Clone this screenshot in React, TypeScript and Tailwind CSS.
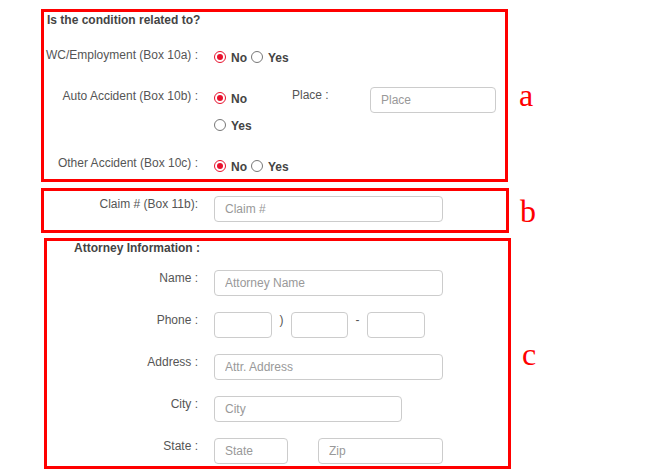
import React from "react";

const Radio = ({ checked }: { checked?: boolean }) =>
  checked ? (
    <span className="w-[12px] h-[12px] rounded-full border-[1.5px] border-[#e8112d] bg-white flex items-center justify-center shrink-0">
      <span className="w-[6px] h-[6px] rounded-full bg-[#e8112d]" />
    </span>
  ) : (
    <span className="w-[12px] h-[12px] rounded-full border border-[#777] bg-white shrink-0" />
  );

const Opt = ({ label, checked }: { label: string; checked?: boolean }) => (
  <span className="flex items-center">
    <Radio checked={checked} />
    <span className="ml-[5px] pt-[2px] font-bold text-[#444] leading-[16px]">{label}</span>
  </span>
);

const Input = ({ w, ph }: { w: string; ph?: string }) => (
  <input
    placeholder={ph}
    className={`${w} h-[26px] border border-[#ccc] rounded-[4px] pl-[10px] text-[12px] text-[#555] placeholder:text-[#999] bg-white outline-none shrink-0`}
  />
);

const Letter = ({ ch, mt }: { ch: string; mt: string }) => (
  <div
    className={`${mt} ml-[11px] text-[32px] leading-[32px] text-[#ff0000] font-['Liberation_Serif','Times_New_Roman',serif]`}
  >
    {ch}
  </div>
);

export default function App() {
  return (
    <div className="w-[669px] h-[473px] overflow-hidden bg-white text-[12px] leading-[16px] text-[#555] font-['Liberation_Sans',Arial,sans-serif]">
      <div className="flex flex-col pl-[41px] pt-[9px]">
        {/* Box a */}
        <div className="flex items-start">
          <div className="w-[467px] h-[173px] border-[3px] border-[#ff0000] flex flex-col">
            <div className="ml-[3px] mt-[1px] h-[14px] leading-[14px] font-bold text-[#444]">
              Is the condition related to?
            </div>
            <div className="mt-[20px] h-[20px] flex items-center">
              <div className="w-[154px] text-right pb-[4px]">WC/Employment (Box 10a) :</div>
              <div className="ml-[16px] flex items-center gap-[4px]">
                <Opt label="No" checked />
                <Opt label="Yes" />
              </div>
            </div>
            <div className="mt-[20px] flex items-start">
              <div className="w-[154px] text-right pt-[1px]">Auto Accident (Box 10b) :</div>
              <div className="ml-[16px] w-[78px] flex flex-col">
                <div className="mt-[1px] h-[20px] flex items-center">
                  <Opt label="No" checked />
                </div>
                <div className="mt-[7px] h-[20px] flex items-center">
                  <Opt label="Yes" />
                </div>
              </div>
              <div className="w-[78px]">Place :</div>
              <Input w="w-[126px]" ph="Place" />
            </div>
            <div className="mt-[21px] h-[20px] flex items-center">
              <div className="w-[154px] text-right pb-[6px]">Other Accident (Box 10c) :</div>
              <div className="ml-[16px] flex items-center gap-[4px]">
                <Opt label="No" checked />
                <Opt label="Yes" />
              </div>
            </div>
          </div>
          <Letter ch="a" mt="mt-[70px]" />
        </div>

        {/* Box b */}
        <div className="mt-[6px] flex items-start">
          <div className="w-[468px] h-[45px] border-[3px] border-[#ff0000] pt-[5px] flex items-start">
            <div className="w-[154px] text-right">Claim # (Box 11b):</div>
            <div className="ml-[16px]">
              <Input w="w-[229px]" ph="Claim #" />
            </div>
          </div>
          <Letter ch="b" mt="mt-[7px]" />
        </div>

        {/* Box c */}
        <div className="mt-[5px] ml-[3px] flex items-start">
          <div className="w-[467px] h-[231px] border-[3px] border-[#ff0000] flex flex-col">
            <div className="ml-[27px] h-[14px] leading-[14px] font-bold text-[#444]">
              Attorney Information :
            </div>
            <div className="mt-[15px] flex flex-col gap-[16px]">
              <div className="flex items-start">
                <div className="w-[151px] text-right">Name :</div>
                <div className="ml-[16px]">
                  <Input w="w-[229px]" ph="Attorney Name" />
                </div>
              </div>
              <div className="flex items-start">
                <div className="w-[151px] text-right">Phone :</div>
                <div className="ml-[16px] flex items-start">
                  <Input w="w-[58px]" />
                  <span className="w-[19px] text-center">)</span>
                  <Input w="w-[57px]" />
                  <span className="w-[19px] text-center">-</span>
                  <Input w="w-[58px]" />
                </div>
              </div>
              <div className="flex items-start">
                <div className="w-[151px] text-right">Address :</div>
                <div className="ml-[16px]">
                  <Input w="w-[229px]" ph="Attr. Address" />
                </div>
              </div>
              <div className="flex items-start">
                <div className="w-[151px] text-right">City :</div>
                <div className="ml-[16px]">
                  <Input w="w-[188px]" ph="City" />
                </div>
              </div>
              <div className="flex items-start">
                <div className="w-[151px] text-right">State :</div>
                <div className="ml-[16px] flex items-start gap-[30px]">
                  <Input w="w-[74px]" ph="State" />
                  <Input w="w-[125px]" ph="Zip" />
                </div>
              </div>
            </div>
          </div>
          <Letter ch="c" mt="mt-[100px]" />
        </div>
      </div>
    </div>
  );
}
